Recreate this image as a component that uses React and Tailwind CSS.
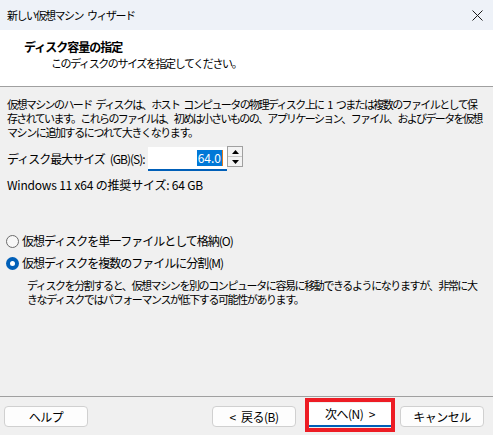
import { useState } from 'react';

function CloseIcon() {
  return (
    <svg width="11" height="11" viewBox="0 0 11 11" fill="none">
      <path d="M0.5 0.5L10.5 10.5M10.5 0.5L0.5 10.5" stroke="#1a1a1a" strokeWidth="1" />
    </svg>
  );
}

function Radio({ checked, label, onClick }) {
  return (
    <div className="flex h-[18px] items-center" onClick={onClick}>
      {checked ? (
        <span className="ml-[-1px] flex h-[13px] w-[13px] items-center justify-center rounded-full bg-[#005fb8]">
          <span className="h-[5px] w-[5px] rounded-full bg-white" />
        </span>
      ) : (
        <span className="ml-[-1px] h-[13px] w-[13px] rounded-full border border-[#6b6b6b] bg-[#f7f7f7]" />
      )}
      <span className="ml-[3px] text-[12px] leading-[16px] tracking-[-1px]">{label}</span>
    </div>
  );
}

function Spinner() {
  return (
    <div className="mt-[-1px] flex h-[21px] w-[16px] flex-col self-start border border-[#a0a0a0] bg-[#f3f3f3]">
      <div className="flex flex-1 items-center justify-center border-b border-[#c8c8c8]">
        <svg width="7" height="4" viewBox="0 0 7 4">
          <path d="M3.5 0L7 4H0Z" fill="#000" />
        </svg>
      </div>
      <div className="flex flex-1 items-center justify-center">
        <svg width="7" height="4" viewBox="0 0 7 4">
          <path d="M0 0H7L3.5 4Z" fill="#000" />
        </svg>
      </div>
    </div>
  );
}

function Button({ children }) {
  return (
    <div className="mt-[9px] flex h-[21px] w-[84px] items-center justify-center rounded-[4px] border border-[#d0d0d0] bg-[#fdfdfd] text-[12px] leading-[16px] tracking-[-0.5px]">
      {children}
    </div>
  );
}

export default function App() {
  const [split, setSplit] = useState(true);

  return (
    <div className="flex h-[435px] w-[493px] flex-col overflow-hidden bg-[#f0f0f0] font-['Noto_Sans_CJK_JP',sans-serif] text-black">
      {/* title bar */}
      <div className="flex h-[30px] items-center justify-between bg-[#eef2f8] pl-[7px] pr-[10px]">
        <span className="text-[11px] leading-[16px] tracking-[-1.5px]">{'新しい仮想マシン\u2002ウィザード'}</span>
        <CloseIcon />
      </div>

      {/* header */}
      <div className="h-[57px] border-b border-[#a0a0a0] bg-white pt-[9px]">
        <div className="pl-[24px] text-[12px] font-bold leading-[16px] tracking-[-1px]">ディスク容量の指定</div>
        <div className="pl-[51px] text-[11px] leading-[16px] tracking-[-1.4px]">このディスクのサイズを指定してください。</div>
      </div>

      {/* body */}
      <div className="flex-1 px-[7px] pt-[10px]">
        <div className="whitespace-nowrap text-[11px] leading-[14px]">
          <div className="tracking-[-1.6px]">{'仮想マシンのハード\u2002ディスクは、ホスト\u2002コンピュータの物理ディスク上に\u20021\u2002つまたは複数のファイルとして保'}</div>
          <div className="tracking-[-1.65px]">存されています。これらのファイルは、初めは小さいものの、アプリケーション、ファイル、およびデータを仮想</div>
          <div className="tracking-[-1.4px]">マシンに追加するにつれて大きくなります。</div>
        </div>

        <div className="mt-[8px] flex h-[24px] items-center">
          <span className="w-[141px] text-[12px] leading-[16px] tracking-[-1px]">{'ディスク最大サイズ\u2002(GB)(S):'}</span>
          <div className="flex h-[24px] w-[79px] items-center justify-end border-b-2 border-[#005fb8] bg-white pr-[4px]">
            <span className="bg-[#0078d7] px-[1px] text-[12px] leading-[16px] text-white">64.0</span>
            <span className="h-[16px] w-px bg-[#e07a1f]" />
          </div>
          <Spinner />
        </div>

        <div className="mt-[6px] text-[12px] leading-[16px] tracking-[-0.2px]">Windows 11 x64 の推奨サイズ: 64 GB</div>

        <div className="mt-[39px]">
          <Radio checked={!split} label="仮想ディスクを単一ファイルとして格納(O)" onClick={() => setSplit(false)} />
          <div className="mt-[4px]">
            <Radio checked={split} label="仮想ディスクを複数のファイルに分割(M)" onClick={() => setSplit(true)} />
          </div>
          <div className="mt-[6px] whitespace-nowrap pl-[20px] text-[11px] leading-[14px] tracking-[-1.4px]">
            <div>ディスクを分割すると、仮想マシンを別のコンピュータに容易に移動できるようになりますが、非常に大</div>
            <div>きなディスクではパフォーマンスが低下する可能性があります。</div>
          </div>
        </div>
      </div>

      {/* footer */}
      <div className="flex h-[39px] items-start border-t border-[#a0a0a0]">
        <div className="ml-[4px]">
          <Button>ヘルプ</Button>
        </div>
        <div className="flex-1" />
        <Button>{'<\u2002戻る(B)'}</Button>
        <div className="ml-[9px] mt-[1px] h-[34px] w-[90px] border-4 border-[#ed1c24] py-[1px]">
          <div className="flex h-[24px] w-full items-center justify-center border-b-2 border-[#005fb8] bg-white text-[12px] leading-[16px] tracking-[-0.5px]">
            {'次へ(N)\u2002>'}
          </div>
        </div>
        <div className="ml-[5px] mr-[9px]">
          <Button>キャンセル</Button>
        </div>
      </div>
    </div>
  );
}
